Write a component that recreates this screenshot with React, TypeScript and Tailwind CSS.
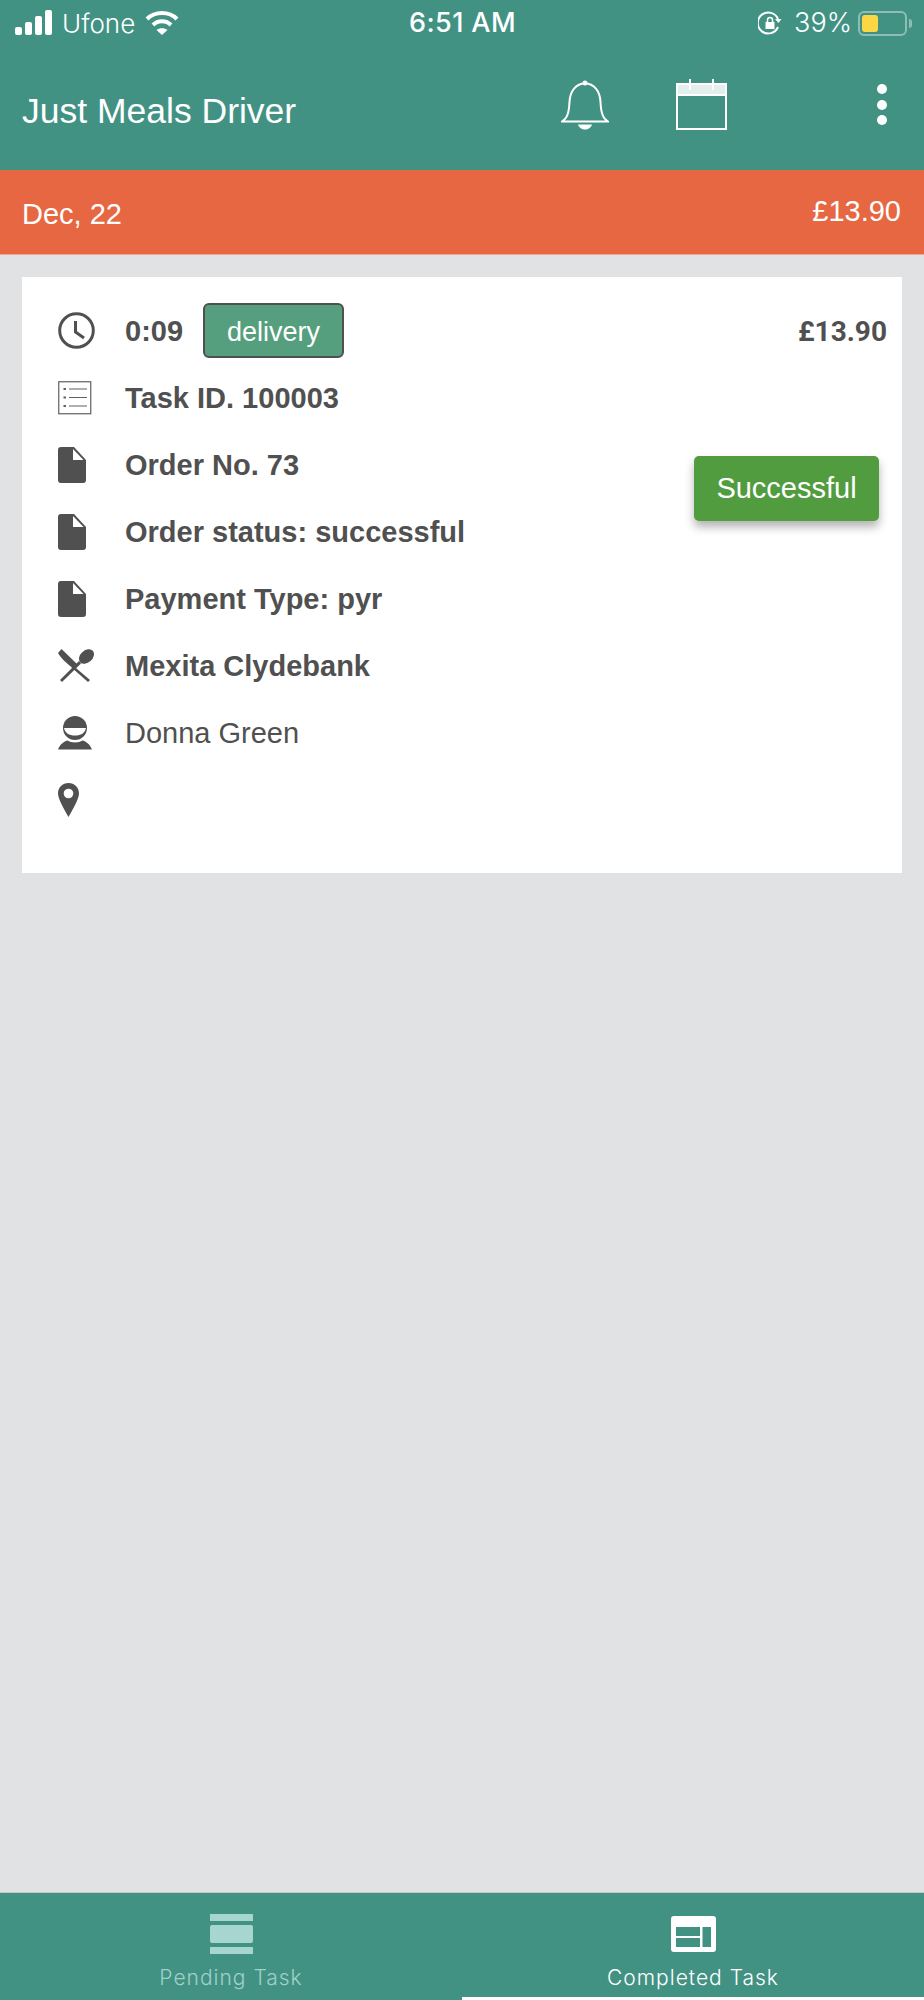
import React from "react";

const FileIcon = () => (
  <svg width="28" height="36" viewBox="0 0 28 36">
    <path d="M3 0H16L28 13V33a3 3 0 0 1-3 3H3a3 3 0 0 1-3-3V3a3 3 0 0 1 3-3Z" fill="#505050" />
    <path d="M15 2L25.500 13H15Z" fill="#fff" />
  </svg>
);

const ClockIcon = () => (
  <svg width="37" height="37" viewBox="0 0 37 37" fill="none" stroke="#505050">
    <circle cx="18.5" cy="18.5" r="16.8" strokeWidth="3" />
    <path d="M17.5 9V20L26 26" strokeWidth="3" />
  </svg>
);

const ListIcon = () => (
  <svg width="34" height="34" viewBox="0 0 34 34" fill="none" stroke="#606060">
    <rect x="0.75" y="0.75" width="32" height="32" strokeWidth="1.2" />
    <path d="M11 8H29M11 16.5H29M11 25H29" strokeWidth="1.2" />
    <path d="M5.5 8H8M5.5 16.5H8M5.5 25H8" strokeWidth="2" />
  </svg>
);

const FoodIcon = () => (
  <svg width="37" height="34" viewBox="0 0 37 34" fill="#505050">
    <path d="M0 4L3.500 0L19 15L15 19C9 15 3 9 0 4Z" />
    <path d="M15 16.500L32 31L30 33L13.500 18.500Z" />
    <path d="M2 31L21 12L23 14.500L4 33Z" />
    <ellipse cx="28.500" cy="7.500" rx="8.500" ry="6" transform="rotate(-42 28.500 7.500)" />
  </svg>
);

const PersonIcon = () => (
  <svg width="34" height="34" viewBox="0 0 34 34" fill="#505050">
    <circle cx="17" cy="12" r="12" />
    <path d="M6 12H28C27 17 23 19.500 17 19.500S7 17 6 12Z" fill="#fff" />
    <path d="M0 33.500C2 28.500 5 26 9.500 24.500C13 27 21 27 24.500 24.500C29 26 32 28.500 34 33.500Z" />
  </svg>
);

const PinIcon = () => (
  <svg width="21" height="34" viewBox="0 0 21 34">
    <path d="M10.5 0C16.5 0 21 4.6 21 10.5C21 16 15 26 10.5 34C6 26 0 16 0 10.5C0 4.6 4.5 0 10.5 0Z" fill="#505050" />
    <circle cx="10.5" cy="10.5" r="4.8" fill="#fff" />
  </svg>
);

const rows = [
  { icon: <ListIcon />, text: "Task ID. 100003", bold: true },
  { icon: <FileIcon />, text: "Order No. 73", bold: true },
  { icon: <FileIcon />, text: "Order status: successful", bold: true },
  { icon: <FileIcon />, text: "Payment Type: pyr", bold: true },
  { icon: <FoodIcon />, text: "Mexita Clydebank", bold: true },
  { icon: <PersonIcon />, text: "Donna Green", bold: false },
  { icon: <PinIcon />, text: "", bold: false },
];

export default function App() {
  return (
    <div className="w-[924px] h-[2000px] flex flex-col bg-[#e1e2e4] font-['Liberation_Sans',Arial,sans-serif] overflow-hidden">
      {/* Status bar + toolbar */}
      <div className="h-[170px] bg-[#429284] text-white shrink-0">
        <div className="h-[46px] grid grid-cols-3 items-center pl-[15px] pr-[12px]">
          <div className="flex items-center">
            <svg width="38" height="26" viewBox="0 0 38 26" fill="#fff">
              <rect x="0" y="17" width="7" height="8" rx="2" />
              <rect x="10" y="12" width="7" height="13" rx="2" />
              <rect x="20" y="6" width="7" height="19" rx="2" />
              <rect x="30" y="0" width="7" height="25" rx="2" />
            </svg>
            <span className="text-[26px] ml-[9px] font-['Inter',sans-serif] font-light">Ufone</span>
            <svg className="ml-[10px]" width="34" height="26" viewBox="0 0 34 26" fill="none" stroke="#fff" strokeWidth="4">
              <path d="M2 9C10 1 24 1 32 9" />
              <path d="M8 15C13 10 21 10 26 15" />
              <path d="M17 25L11.5 20C14.5 17.5 19.5 17.5 22.5 20Z" fill="#fff" stroke="none" />
            </svg>
          </div>
          <div className="text-center text-[27px] font-medium font-['Inter',sans-serif] tracking-[0.4px] pr-[2px]">6:51 AM</div>
          <div className="flex items-center justify-end">
            <svg width="24" height="24" viewBox="0 0 24 24" fill="none" stroke="#fff" strokeWidth="2">
              <path d="M20 16A10.5 10.5 0 1 1 20 8" />
              <path d="M23.5 8H17L20.5 12Z" fill="#fff" stroke="none" />
              <rect x="7.5" y="11" width="9" height="7" fill="#fff" stroke="none" />
              <path d="M9.5 11V9a2.5 2.5 0 0 1 5 0v2" strokeWidth="1.5" />
            </svg>
            <span className="text-[27px] ml-[12px] font-['Inter',sans-serif] font-light">39%</span>
            <div className="ml-[6px] w-[49px] h-[25px] rounded-[6px] border-2 border-white/40 p-[2px]">
              <div className="w-[16px] h-full rounded-[3px] bg-[#fbd843]" />
            </div>
            <div className="w-[3px] h-[9px] bg-white/40 rounded-r-full ml-[2px]" />
          </div>
        </div>
        <div className="h-[124px] flex items-center pl-[22px] pr-[37px]">
          <h1 className="text-[35.500px] font-normal flex-1 leading-none mt-[7px]">Just Meals Driver</h1>
          <svg className="mb-[7px]" width="48" height="50" viewBox="0 0 48 50" fill="none" stroke="#fff" strokeWidth="2">
            <circle cx="24" cy="3" r="2.5" fill="#fff" stroke="none" />
            <path d="M1 41.5H47C41 38 40 31 39.5 22C39 11 33 3.5 24 3.5S9 11 8.500 22C8 31 7 38 1 41.5Z" />
            <path d="M17 44.500H31C30 48 27 49.500 24 49.500S18 48 17 44.500Z" fill="#fff" stroke="none" />
          </svg>
          <svg className="ml-[67px] mb-[7px]" width="51" height="51" viewBox="0 0 51 51" fill="none" stroke="#fff">
            <rect x="1" y="5" width="49" height="45" strokeWidth="2" />
            <rect x="2" y="6" width="47" height="10" fill="#fff" fillOpacity="0.85" strokeWidth="0" />
            <path d="M1 16H50" strokeWidth="2" />
            <path d="M14 0V11M37 0V11" strokeWidth="2" />
          </svg>
          <div className="ml-[150px] mb-[7px] flex flex-col gap-[5.500px]">
            <div className="w-[10px] h-[10px] rounded-full bg-white" />
            <div className="w-[10px] h-[10px] rounded-full bg-white" />
            <div className="w-[10px] h-[10px] rounded-full bg-white" />
          </div>
        </div>
      </div>

      {/* Date band */}
      <div className="h-[85px] bg-[#e66741] text-white flex items-center justify-between pl-[22px] pr-[23px] border-b border-[#f0a890] shrink-0">
        <span className="text-[29px] mt-[5px]">Dec, 22</span>
        <span className="text-[29px] mb-[1px]">£13.90</span>
      </div>

      {/* Card */}
      <div className="flex-1 px-[22px] pt-[22px]">
        <div className="bg-white h-[596px] pt-[20px] pl-[36px] pr-[15px] pb-[40px] flex justify-between text-[#505050]">
          <div className="flex flex-col">
            <div className="h-[67px] flex items-center">
              <div className="w-[67px] shrink-0"><ClockIcon /></div>
              <span className="text-[29px] font-bold mt-[2px]">0:09</span>
              <span className="ml-[20px] w-[141px] h-[55px] pt-[3px] rounded-[6px] border-2 border-[#505050] bg-[#559f7e] text-white text-[27px] flex items-center justify-center">delivery</span>
            </div>
            {rows.map((row, i) => (
              <div key={i} className="h-[67px] flex items-center">
                <div className="w-[67px] shrink-0 flex items-center">{row.icon}</div>
                <span className={row.bold ? "text-[29px] font-bold mt-[2px]" : "text-[29px] font-normal mt-[2px]"}>{row.text}</span>
              </div>
            ))}
          </div>
          <div className="flex flex-col items-end">
            <div className="h-[67px] flex items-center text-[28px] font-bold font-['Roboto',sans-serif] mt-[1px]">£13.90</div>
            <button className="mt-[91px] mr-[8px] w-[185px] h-[65px] pt-[1px] rounded-[5px] bg-[#519c3f] text-white text-[29px] shadow-[0_6px_10px_rgba(0,0,0,0.3)]">Successful</button>
          </div>
        </div>
      </div>

      {/* Bottom tabs */}
      <div className="h-[108px] bg-[#429284] border-t border-[#c4cac8] grid grid-cols-2 shrink-0">
        <div className="flex flex-col items-center pt-[21px]">
          <div className="w-[43px] flex flex-col gap-[4px]">
            <div className="h-[7px] bg-[#a7d5cf]" />
            <div className="h-[18px] rounded-[2px] bg-[#a7d5cf]" />
            <div className="h-[7px] bg-[#a7d5cf]" />
          </div>
          <span className="mt-[13px] text-[21px] tracking-[1px] text-[#9fd0c9] font-['Inter',sans-serif] font-light leading-none">Pending Task</span>
        </div>
        <div className="flex flex-col items-center pt-[23px] border-b-[3px] border-white">
          <svg width="45" height="36" viewBox="0 0 45 36" fill="#fff">
            <path fillRule="evenodd" d="M3 0H42a3 3 0 0 1 3 3V33a3 3 0 0 1-3 3H3a3 3 0 0 1-3-3V3a3 3 0 0 1 3-3ZM5 11V20H29V11ZM5 22V31H29V22ZM31.500 11V31H40V11Z" />
          </svg>
          <span className="mt-[15px] text-[21px] tracking-[1px] text-white font-['Inter',sans-serif] font-light leading-none">Completed Task</span>
        </div>
      </div>
    </div>
  );
}
